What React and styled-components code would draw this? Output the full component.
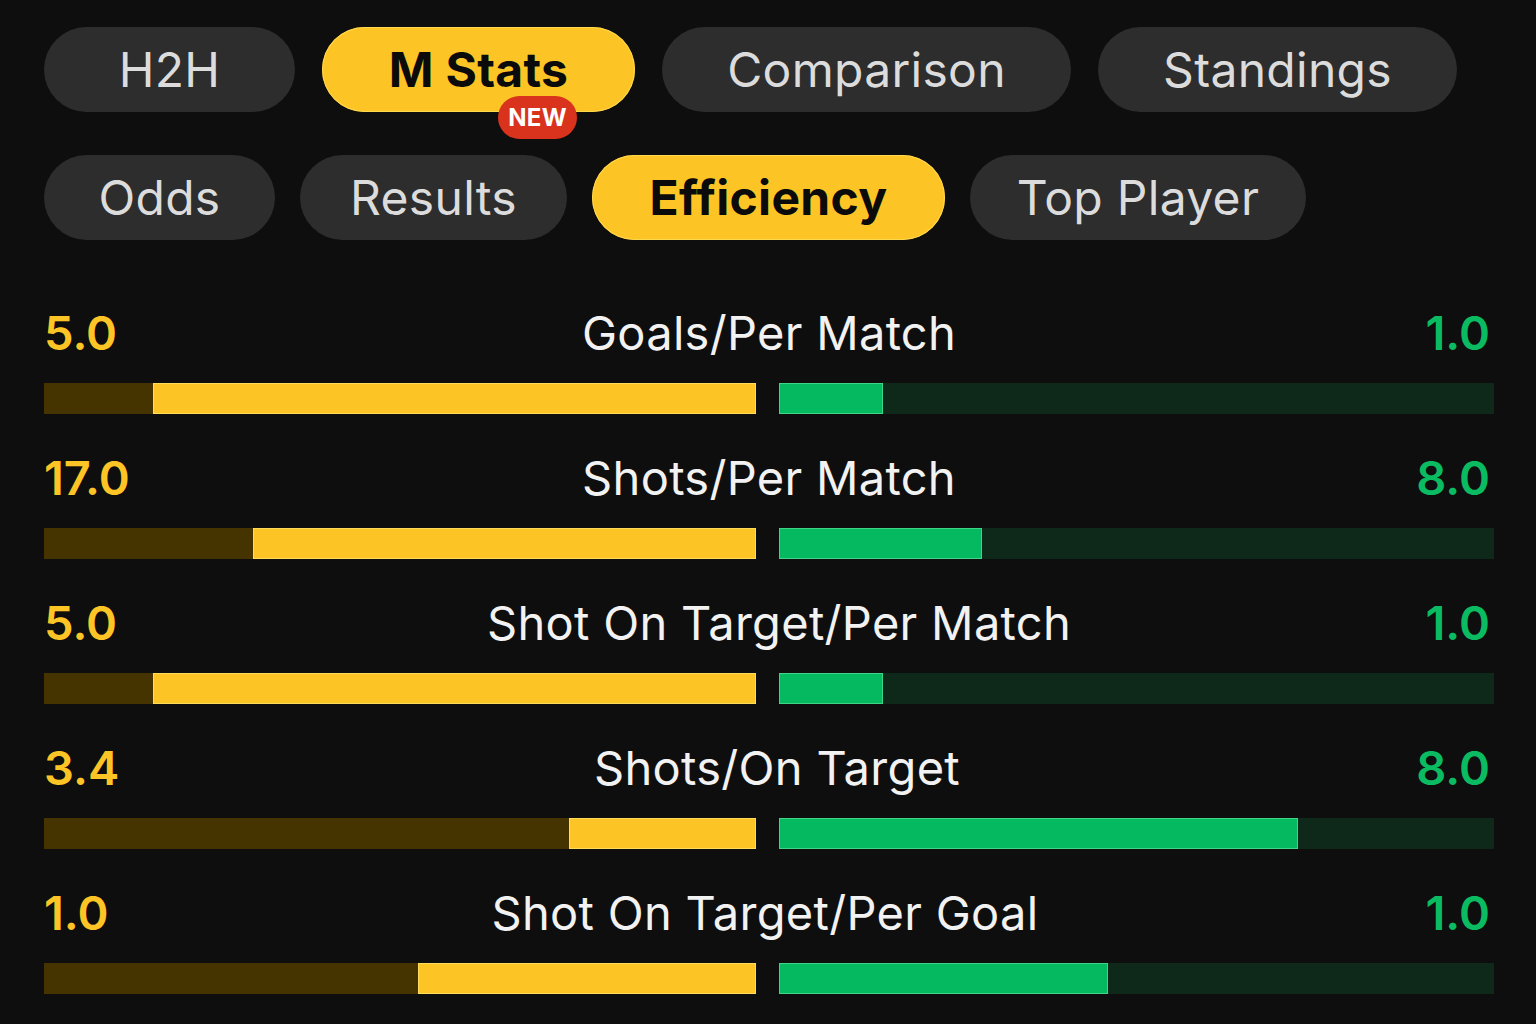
import styled, { createGlobalStyle } from "styled-components";

const GlobalStyle = createGlobalStyle`
  html, body {
    margin: 0;
    padding: 0;
    background: #0e0e0e;
    font-family: Inter, "Noto Sans", "Liberation Sans", sans-serif;
  }
`;

const Page = styled.div`
  width: 1536px;
  height: 1024px;
  box-sizing: border-box;
  padding: 27px 42px 0 44px;
  background: #0e0e0e;
  overflow: hidden;
`;

const TabRow = styled.div`
  display: flex;
  gap: ${(p) => p.$gap}px;
  margin-bottom: ${(p) => p.$mb || 0}px;
`;

const Tab = styled.div`
  position: relative;
  width: ${(p) => p.$w}px;
  height: 85px;
  border-radius: 43px;
  display: flex;
  align-items: center;
  justify-content: center;
  font-size: 48px;
  letter-spacing: 0.3px;
  font-weight: ${(p) => (p.$active ? 700 : 400)};
  color: ${(p) => (p.$active ? "#0b0b0b" : "#dcdcdc")};
  background: ${(p) => (p.$active ? "#fdc426" : "#2d2d2d")};
  box-shadow: ${(p) => (p.$active ? "inset 0 0 0 1px #ffd84d" : "none")};
`;

const Badge = styled.span`
  position: absolute;
  left: 176px;
  top: 69px;
  width: 79px;
  height: 43px;
  border-radius: 22px;
  background: #d9321d;
  color: #fff;
  font-size: 24px;
  font-weight: 700;
  display: flex;
  align-items: center;
  justify-content: center;
`;

const StatList = styled.div`
  display: flex;
  flex-direction: column;
  gap: 35px;
  margin-top: 64px;
`;

const Stat = styled.div`
  display: flex;
  flex-direction: column;
  gap: 23px;
`;

const StatHead = styled.div`
  display: grid;
  grid-template-columns: 200px 1fr 200px;
  align-items: center;
  height: 56px;
`;

const Value = styled.span`
  font-size: 47px;
  font-weight: 600;
  color: ${(p) => (p.$home ? "#fdc426" : "#0bbb62")};
  text-align: ${(p) => (p.$home ? "left" : "right")};
  padding-right: ${(p) => (p.$home ? 0 : 4)}px;
`;

const Label = styled.span`
  font-size: 47px;
  color: #f2f2f2;
  text-align: center;
  letter-spacing: 0.3px;
  transform: translateX(${(p) => p.$shift || 0}px);
`;

const Bars = styled.div`
  display: grid;
  grid-template-columns: 712px 1fr;
  gap: 23px;
`;

const Track = styled.div`
  height: 31px;
  display: flex;
  justify-content: ${(p) => (p.$home ? "flex-end" : "flex-start")};
  background: ${(p) => (p.$home ? "#463400" : "#0e2819")};
`;

const Fill = styled.div`
  height: 100%;
  background: ${(p) => (p.$home ? "#fdc426" : "#05b960")};
  box-shadow: inset 0 0 0 1px ${(p) => (p.$home ? "#ffdc5a" : "#3fd487")};
`;

const row1 = [
  { label: "H2H", w: 251 },
  { label: "M Stats", w: 313, active: true, badge: true },
  { label: "Comparison", w: 409 },
  { label: "Standings", w: 359 },
];

const row2 = [
  { label: "Odds", w: 231 },
  { label: "Results", w: 267 },
  { label: "Efficiency", w: 353, active: true },
  { label: "Top Player", w: 336 },
];

const stats = [
  { label: "Goals/Per Match", home: "5.0", away: "1.0", hp: 84.7, ap: 14.6, shift: 0 },
  { label: "Shots/Per Match", home: "17.0", away: "8.0", hp: 70.6, ap: 28.4, shift: 0 },
  { label: "Shot On Target/Per Match", home: "5.0", away: "1.0", hp: 84.7, ap: 14.6, shift: 10 },
  { label: "Shots/On Target", home: "3.4", away: "8.0", hp: 26.3, ap: 72.6, shift: 8 },
  { label: "Shot On Target/Per Goal", home: "1.0", away: "1.0", hp: 47.5, ap: 46.0, shift: -4 },
];

function Tabs({ items, gap, mb }) {
  return (
    <TabRow $gap={gap} $mb={mb}>
      {items.map((t) => (
        <Tab key={t.label} $w={t.w} $active={t.active}>
          {t.label}
          {t.badge && <Badge>NEW</Badge>}
        </Tab>
      ))}
    </TabRow>
  );
}

export default function App() {
  return (
    <>
      <GlobalStyle />
      <Page>
        <Tabs items={row1} gap={27} mb={43} />
        <Tabs items={row2} gap={25} />
        <StatList>
          {stats.map((s) => (
            <Stat key={s.label}>
              <StatHead>
                <Value $home>{s.home}</Value>
                <Label $shift={s.shift}>{s.label}</Label>
                <Value>{s.away}</Value>
              </StatHead>
              <Bars>
                <Track $home>
                  <Fill $home style={{ width: `${s.hp}%` }} />
                </Track>
                <Track>
                  <Fill style={{ width: `${s.ap}%` }} />
                </Track>
              </Bars>
            </Stat>
          ))}
        </StatList>
      </Page>
    </>
  );
}
